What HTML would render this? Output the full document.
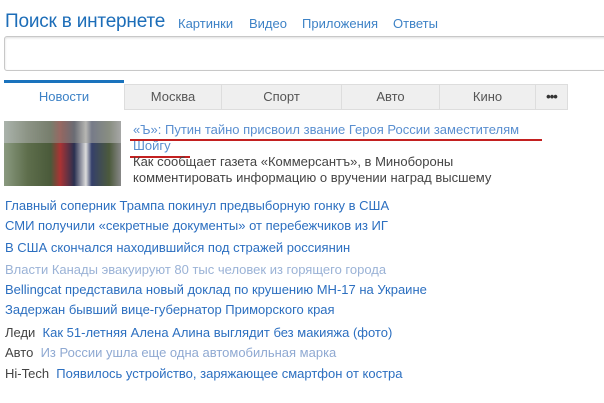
<!DOCTYPE html>
<html><head><meta charset="utf-8"><style>
body{margin:0;width:604px;height:403px;overflow:hidden;background:#fff;font-family:"Liberation Sans",sans-serif;position:relative}
.a{position:absolute;white-space:nowrap}
.t{color:#1c6db8;font-size:19px;left:5px;top:11px;letter-spacing:-0.2px}
.l{color:#3d82c6;font-size:13px;top:16px}
.box{position:absolute;left:4px;top:36px;width:606px;height:33px;border:1px solid #c8c8c8;border-radius:3px;box-shadow:inset 0 1px 2px #ddd}
.tab{position:absolute;top:84px;height:26px;background:#efefef;border:1px solid #ddd;border-left:none;font-size:13px;color:#555;text-align:center;line-height:24px;box-sizing:border-box}
.act{background:#fff;border:none;border-top:3px solid #1a73bd;color:#3d82c6;top:80px;height:30px}
.n{font-size:13px;color:#2c6fc0;left:5px}
.g{color:#444}
</style></head><body>
<div class="a t">Поиск в интернете</div>
<div class="a l" style="left:178px">Картинки</div>
<div class="a l" style="left:249px">Видео</div>
<div class="a l" style="left:302px">Приложения</div>
<div class="a l" style="left:393px">Ответы</div>
<div class="box"></div>
<div class="tab act" style="left:4px;width:120px;line-height:28px">Новости</div>
<div class="tab" style="left:124px;width:98px;border-left:1px solid #ddd">Москва</div>
<div class="tab" style="left:222px;width:120px">Спорт</div>
<div class="tab" style="left:342px;width:98px">Авто</div>
<div class="tab" style="left:440px;width:96px">Кино</div>
<div class="tab" style="left:536px;width:32px;font-weight:bold;color:#333;letter-spacing:-1px">•••</div>
<div class="a" style="left:4px;top:121px;width:117px;height:65px;background:linear-gradient(90deg,#8a9a80 0%,#5e6e4c 20%,#4a5a3a 40%,#a33 48%,#2a3050 60%,#dcdcdc 70%,#35406a 75%,#4c5a3c 90%,#888 100%)"></div>
<div class="a" style="left:4px;top:121px;width:117px;height:22px;background:linear-gradient(90deg,#c0c4c8,#8a8a80 50%,#bbb);opacity:.6"></div>
<div class="a" style="left:133px;top:122px;font-size:13px;color:#5a8fd0">«Ъ»: Путин тайно присвоил звание Героя России заместителям</div>
<div class="a" style="left:133px;top:138px;font-size:13px;color:#5a8fd0">Шойгу</div>
<div class="a" style="left:130px;top:139px;width:412px;height:2px;background:#c32020"></div>
<div class="a" style="left:130px;top:156px;width:60px;height:2px;background:#c32020"></div>
<div class="a" style="left:133px;top:154px;font-size:13px;color:#444">Как сообщает газета «Коммерсантъ», в Минобороны</div>
<div class="a" style="left:133px;top:170px;font-size:13px;color:#444">комментировать информацию о вручении наград высшему</div>
<div class="a n" style="top:198px">Главный соперник Трампа покинул предвыборную гонку в США</div>
<div class="a n" style="top:218px">СМИ получили «секретные документы» от перебежчиков из ИГ</div>
<div class="a n" style="top:240px">В США скончался находившийся под стражей россиянин</div>
<div class="a n" style="top:262px;color:#9ab2d6">Власти Канады эвакуируют 80 тыс человек из горящего города</div>
<div class="a n" style="top:282px">Bellingcat представила новый доклад по крушению MH-17 на Украине</div>
<div class="a n" style="top:302px">Задержан бывший вице-губернатор Приморского края</div>
<div class="a n" style="top:325px"><span class="g">Леди</span>&nbsp; Как 51-летняя Алена Алина выглядит без макияжа (фото)</div>
<div class="a n" style="top:345px"><span class="g">Авто</span>&nbsp; <span style="color:#8fa9d2">Из России ушла еще одна автомобильная марка</span></div>
<div class="a n" style="top:366px"><span class="g">Hi-Tech</span>&nbsp; Появилось устройство, заряжающее смартфон от костра</div>
</body></html>
